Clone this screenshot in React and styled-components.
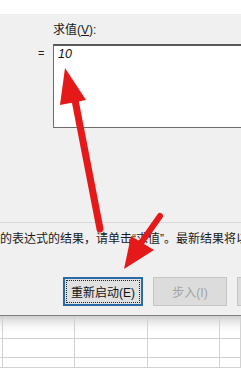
import React from "react";
import styled, { createGlobalStyle } from "styled-components";

const Global = createGlobalStyle`
  html, body { margin: 0; padding: 0; background: #fff; }
  body { width: 241px; height: 368px; overflow: hidden; font-family: "Liberation Sans", "Noto Sans CJK SC", sans-serif; }
  #root { width: 241px; height: 368px; }
`;

const Page = styled.div`
  position: relative;
  width: 241px;
  height: 368px;
  overflow: hidden;
  display: flex;
  flex-direction: column;
  background: #fff;
`;

const TopStrip = styled.div`
  height: 14px;
  background: #ffffff;
  flex: none;
`;

const Dialog = styled.div`
  flex: none;
  height: 302px;
  box-sizing: border-box;
  background: #f0f0f0;
  border-bottom: 1px solid #7f7f7f;
  display: flex;
  flex-direction: column;
  overflow: hidden;
`;

const FieldLabel = styled.div`
  margin: 9px 0 0 53px;
  font-size: 12px;
  line-height: 15px;
  color: #1a1a1a;
  white-space: nowrap;
  u { text-decoration: underline; text-underline-offset: 1px; }
`;

const ValueRow = styled.div`
  display: flex;
  margin-top: 6px;
  width: 300px;
`;

const Equals = styled.div`
  width: 53px;
  box-sizing: border-box;
  padding: 2px 0 0 38px;
  font-size: 11px;
  line-height: 14px;
  color: #222;
`;

const ValueBox = styled.div`
  width: 220px;
  height: 84px;
  box-sizing: border-box;
  background: #fff;
  border: 1px solid #6e6e6e;
  border-top: 2px solid #5a5a5a;
  padding: 1px 0 0 4px;
  font-size: 12.5px;
  line-height: 14px;
  font-style: italic;
  color: #111;
`;

const Separator = styled.div`
  margin-top: 94px;
  height: 1px;
  background: #d8d8d8;
`;

const Instruction = styled.div`
  margin-top: 8px;
  font-size: 12px;
  line-height: 17px;
  color: #1a1a1a;
  white-space: nowrap;
`;

const ButtonRow = styled.div`
  display: flex;
  gap: 10px;
  margin-top: 29px;
  padding-left: 63px;
`;

const Button = styled.div`
  flex: none;
  position: relative;
  width: ${(p) => p.$w}px;
  height: 29px;
  box-sizing: border-box;
  display: flex;
  align-items: center;
  justify-content: center;
  font-size: 12px;
  white-space: nowrap;
  background: ${(p) => (p.$disabled ? "#dcdcdc" : "#e1e1e1")};
  border: ${(p) => (p.$focused ? "2px solid #2a6aa6" : p.$disabled ? "1px solid #c6c6c6" : "1px solid #adadad")};
  color: ${(p) => (p.$disabled ? "#a4a4a4" : "#111")};
`;

const FocusRing = styled.span`
  position: absolute;
  inset: 1px;
  border: 1px dotted #222;
  pointer-events: none;
`;

const Sheet = styled.div`
  flex: 1;
  display: grid;
  grid-template-columns: 3px 72px 73px 72px 1fr;
  grid-template-rows: 23px 19px 1fr;
  background: linear-gradient(to bottom, #cfcfcf 0px, #e6e6e6 5px, #f7f7f7 11px, #ffffff 17px);
`;

const Cell = styled.div`
  box-sizing: border-box;
  border-right: 1px solid #d2d2d2;
  border-bottom: 1px solid #d2d2d2;
`;

const Overlay = styled.svg`
  position: absolute;
  left: 0;
  top: 0;
  width: 241px;
  height: 368px;
  pointer-events: none;
`;

export default function App() {
  const cells = [];
  for (let i = 0; i < 15; i++) cells.push(<Cell key={i} />);
  return (
    <>
      <Global />
      <Page>
        <TopStrip />
        <Dialog>
          <FieldLabel>
            求值(<u>V</u>):
          </FieldLabel>
          <ValueRow>
            <Equals>=</Equals>
            <ValueBox>10</ValueBox>
          </ValueRow>
          <Separator />
          <Instruction>的表达式的结果，请单击“求值”。最新结果将以斜体显示。</Instruction>
          <ButtonRow>
            <Button $w={80} $focused>
              <FocusRing />
              重新启动(E)
            </Button>
            <Button $w={74} $disabled>
              步入(I)
            </Button>
            <Button $w={74} $disabled />
          </ButtonRow>
        </Dialog>
        <Sheet>{cells}</Sheet>
        <Overlay viewBox="0 0 241 368">
          <line x1="100" y1="229" x2="75" y2="100" stroke="#e5191a" strokeWidth="7" strokeLinecap="round" />
          <polygon points="65,68 60,105 86,100" fill="#e5191a" />
          <line x1="160" y1="216" x2="141" y2="243" stroke="#e5191a" strokeWidth="6" strokeLinecap="round" />
          <polygon points="124,269 131,236 154,250" fill="#e5191a" />
        </Overlay>
      </Page>
    </>
  );
}
